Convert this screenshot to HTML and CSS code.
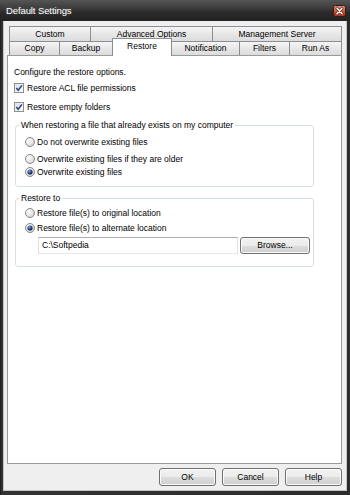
FILE: index.html
```html
<!DOCTYPE html>
<html>
<head>
<meta charset="utf-8">
<title>Default Settings</title>
<link rel="stylesheet" href="styles.css">
</head>
<body>
<div class="window">
  <div class="titlebar">
    <span class="title">Default Settings</span>
    <span class="close">
      <svg width="13" height="12" viewBox="0 0 13 12">
        <defs>
          <linearGradient id="rg" x1="0" y1="0" x2="0" y2="1">
            <stop offset="0" stop-color="#eaa08f"/>
            <stop offset="0.5" stop-color="#cf5a41"/>
            <stop offset="1" stop-color="#b3311b"/>
          </linearGradient>
        </defs>
        <rect x="0.5" y="0.5" width="12" height="11" rx="2" fill="url(#rg)" stroke="#3a1810"/>
        <path d="M4 3.2 L9 8.8 M9 3.2 L4 8.8" stroke="#5a1a0e" stroke-width="3" stroke-linecap="round"/>
        <path d="M4 3.2 L9 8.8 M9 3.2 L4 8.8" stroke="#ffffff" stroke-width="1.6" stroke-linecap="round"/>
      </svg>
    </span>
  </div>
  <div class="client">
    <div class="tabs">
      <div class="tabrow">
        <div class="tab t-custom">Custom</div>
        <div class="tab t-adv">Advanced Options</div>
        <div class="tab t-mgmt last">Management Server</div>
      </div>
      <div class="tabrow">
        <div class="tab t-copy">Copy</div>
        <div class="tab t-backup">Backup</div>
        <div class="tab t-restore selected">Restore</div>
        <div class="tab t-notif">Notification</div>
        <div class="tab t-filters">Filters</div>
        <div class="tab t-runas last">Run As</div>
      </div>
    </div>
    <div class="panel">
      <div class="intro">Configure the restore options.</div>
      <div class="row check first">
        <svg class="cb" width="10" height="10" viewBox="0 0 10 10">
          <defs>
            <linearGradient id="cbg" x1="0" y1="0" x2="1" y2="1">
              <stop offset="0" stop-color="#dcdcdc"/>
              <stop offset="1" stop-color="#fbfbfb"/>
            </linearGradient>
          </defs>
          <rect x="0.5" y="0.5" width="9" height="9" fill="#f4f4f4" stroke="#8e8f8f"/>
          <rect x="1.5" y="1.5" width="7" height="7" fill="url(#cbg)"/>
          <path d="M2.3 5 L4.2 7.2 L7.9 2.4" fill="none" stroke="#24428f" stroke-width="1.5"/>
        </svg>
        <span>Restore ACL file permissions</span>
      </div>
      <div class="row check second">
        <svg class="cb" width="10" height="10" viewBox="0 0 10 10">
          <rect x="0.5" y="0.5" width="9" height="9" fill="#f4f4f4" stroke="#8e8f8f"/>
          <rect x="1.5" y="1.5" width="7" height="7" fill="url(#cbg)"/>
          <path d="M2.3 5 L4.2 7.2 L7.9 2.4" fill="none" stroke="#24428f" stroke-width="1.5"/>
        </svg>
        <span>Restore empty folders</span>
      </div>

      <fieldset class="group g1">
        <legend>When restoring a file that already exists on my computer</legend>
        <div class="opts">
          <div class="row radio r1">
            <svg class="rb" width="10" height="10" viewBox="0 0 10 10">
              <defs>
                <radialGradient id="rbg" cx="0.35" cy="0.35" r="0.7">
                  <stop offset="0" stop-color="#ffffff"/>
                  <stop offset="1" stop-color="#d3d3d3"/>
                </radialGradient>
              </defs>
              <circle cx="5" cy="5" r="4.5" fill="url(#rbg)" stroke="#8a8a8a"/>
            </svg>
            <span>Do not overwrite existing files</span>
          </div>
          <div class="row radio r2">
            <svg class="rb" width="10" height="10" viewBox="0 0 10 10">
              <circle cx="5" cy="5" r="4.5" fill="url(#rbg)" stroke="#8a8a8a"/>
            </svg>
            <span>Overwrite existing files if they are older</span>
          </div>
          <div class="row radio r3">
            <svg class="rb" width="10" height="10" viewBox="0 0 10 10">
              <defs>
                <radialGradient id="dot" cx="0.4" cy="0.35" r="0.7">
                  <stop offset="0" stop-color="#7fa6d8"/>
                  <stop offset="0.6" stop-color="#1f3f7a"/>
                  <stop offset="1" stop-color="#0d2350"/>
                </radialGradient>
              </defs>
              <circle cx="5" cy="5" r="4.5" fill="url(#rbg)" stroke="#8a8a8a"/>
              <circle cx="5" cy="5" r="2.6" fill="url(#dot)"/>
            </svg>
            <span>Overwrite existing files</span>
          </div>
        </div>
      </fieldset>

      <fieldset class="group g2">
        <legend>Restore to</legend>
        <div class="opts opts2">
          <div class="row radio s1">
            <svg class="rb" width="10" height="10" viewBox="0 0 10 10">
              <circle cx="5" cy="5" r="4.5" fill="url(#rbg)" stroke="#8a8a8a"/>
            </svg>
            <span>Restore file(s) to original location</span>
          </div>
          <div class="row radio s2">
            <svg class="rb" width="10" height="10" viewBox="0 0 10 10">
              <circle cx="5" cy="5" r="4.5" fill="url(#rbg)" stroke="#8a8a8a"/>
              <circle cx="5" cy="5" r="2.6" fill="url(#dot)"/>
            </svg>
            <span>Restore file(s) to alternate location</span>
          </div>
          <div class="pathrow">
            <div class="textbox">C:\Softpedia</div>
            <div class="btn browse">Browse...</div>
          </div>
        </div>
      </fieldset>
    </div>
    <div class="buttons">
      <div class="btn">OK</div>
      <div class="btn">Cancel</div>
      <div class="btn">Help</div>
    </div>
  </div>
</div>
</body>
</html>
```

FILE: styles.css
```css
html, body {
  margin: 0;
  padding: 0;
  background: #1e1e1e;
}

body {
  font-family: "Liberation Sans", Arial, sans-serif;
  font-size: 8.5px;
  color: #000;
}

.window {
  width: 350px;
  height: 495px;
  box-sizing: border-box;
  background: linear-gradient(90deg, #1c1c1c 0, #333333 2px, #2c2c2c 100%);
  display: flex;
  flex-direction: column;
}

.titlebar {
  height: 21px;
  flex: none;
  display: flex;
  align-items: center;
  padding: 0 4px 0 6px;
  background: linear-gradient(180deg, #555555 0, #3b3b3b 40%, #2a2a2a 60%, #222222 100%);
  color: #ffffff;
}

.title {
  font-size: 9.5px;
  letter-spacing: -0.1px;
  text-shadow: 0 0 3px rgba(255, 255, 255, 0.25);
}

.close {
  margin-left: auto;
  width: 13px;
  height: 12px;
  display: block;
}

.close svg {
  display: block;
}

.client {
  flex: 1;
  margin: 0 3px 4px 3px;
  border: 1px solid #c4c4c4;
  border-top: none;
  background: #efefef;
  display: flex;
  flex-direction: column;
}

.tabs {
  padding: 5px 0 0 5px;
}

.tabrow {
  display: flex;
  height: 14px;
}

.tabrow:first-child {
  height: 15px;
}

.tab {
  box-sizing: border-box;
  border-top: 1px solid #8c8e94;
  border-left: 1px solid #8c8e94;
  background: linear-gradient(180deg, #f5f5f5 0, #e6e6e6 55%, #dcdcdc 100%);
  text-align: center;
  line-height: 13px;
  white-space: nowrap;
}

.tabrow:first-child .tab {
  line-height: 14px;
}

.tab.last {
  border-right: 1px solid #8c8e94;
}

.t-custom { width: 81px; }
.t-adv { width: 122px; }
.t-mgmt { width: 130px; }

.t-copy { width: 50px; }
.t-backup { width: 53px; }
.t-restore { width: 60px; }
.t-notif { width: 67px; border-left: none; }
.t-filters { width: 50px; }
.t-runas { width: 53px; }

.tab.selected {
  height: 18px;
  margin-top: -3px;
  margin-bottom: -1px;
  border-right: 1px solid #8c8e94;
  background: #ffffff;
  z-index: 2;
  line-height: 12px;
  padding-top: 1px;
}

.panel {
  margin-left: 3px;
  width: 335px;
  height: 409px;
  flex: none;
  box-sizing: border-box;
  border: 1px solid #9a9a9a;
  background: #ffffff;
  padding: 10px 0 0 6px;
}

.intro {
  height: 12px;
  line-height: 12px;
}

.row {
  display: flex;
  align-items: center;
  white-space: nowrap;
}

.check {
  height: 14px;
}

.check.first { margin-top: 3px; }
.check.second { margin-top: 5px; }

.cb {
  flex: none;
  margin-right: 3px;
  display: block;
}

.group {
  margin: 5px 0 0 1px;
  padding: 0;
  width: 299px;
  box-sizing: border-box;
  border: 1px solid #d5dfe5;
  border-radius: 3px;
  min-width: 0;
}

.group legend {
  margin-left: 3px;
  padding: 0 2px;
  height: 12px;
  line-height: 12px;
}

.opts {
  padding: 0 0 8px 9px;
}

.opts2 {
  padding-bottom: 12px;
}

.radio {
  height: 12px;
}

.rb {
  flex: none;
  margin-right: 2px;
  display: block;
}

.r1 { margin-top: 5px; }
.r2 { margin-top: 5px; }
.r3 { margin-top: 1px; }

.s1 { margin-top: 3px; }
.s2 { margin-top: 3px; }

.pathrow {
  margin: 3px 0 0 13px;
  display: flex;
  height: 17px;
}

.textbox {
  width: 200px;
  height: 17px;
  box-sizing: border-box;
  border: 1px solid #abadb3;
  border-left-color: #dbdfe6;
  border-right-color: #dbdfe6;
  border-bottom-color: #e3e9ef;
  background: #ffffff;
  padding-left: 3px;
  line-height: 15px;
}

.btn {
  box-sizing: border-box;
  border: 1px solid #707070;
  border-radius: 3px;
  background: linear-gradient(180deg, #f2f2f2 0, #ebebeb 50%, #dddddd 50%, #cfcfcf 100%);
  box-shadow: inset 0 0 0 1px #fbfbfb;
  text-align: center;
  line-height: 16px;
}

.browse {
  width: 70px;
  height: 17px;
  margin-left: 2px;
  line-height: 15px;
}

.buttons {
  display: flex;
  justify-content: flex-end;
  gap: 6px;
  padding-right: 4px;
  margin-top: 4px;
}

.buttons .btn {
  width: 57px;
  height: 18px;
}
```
